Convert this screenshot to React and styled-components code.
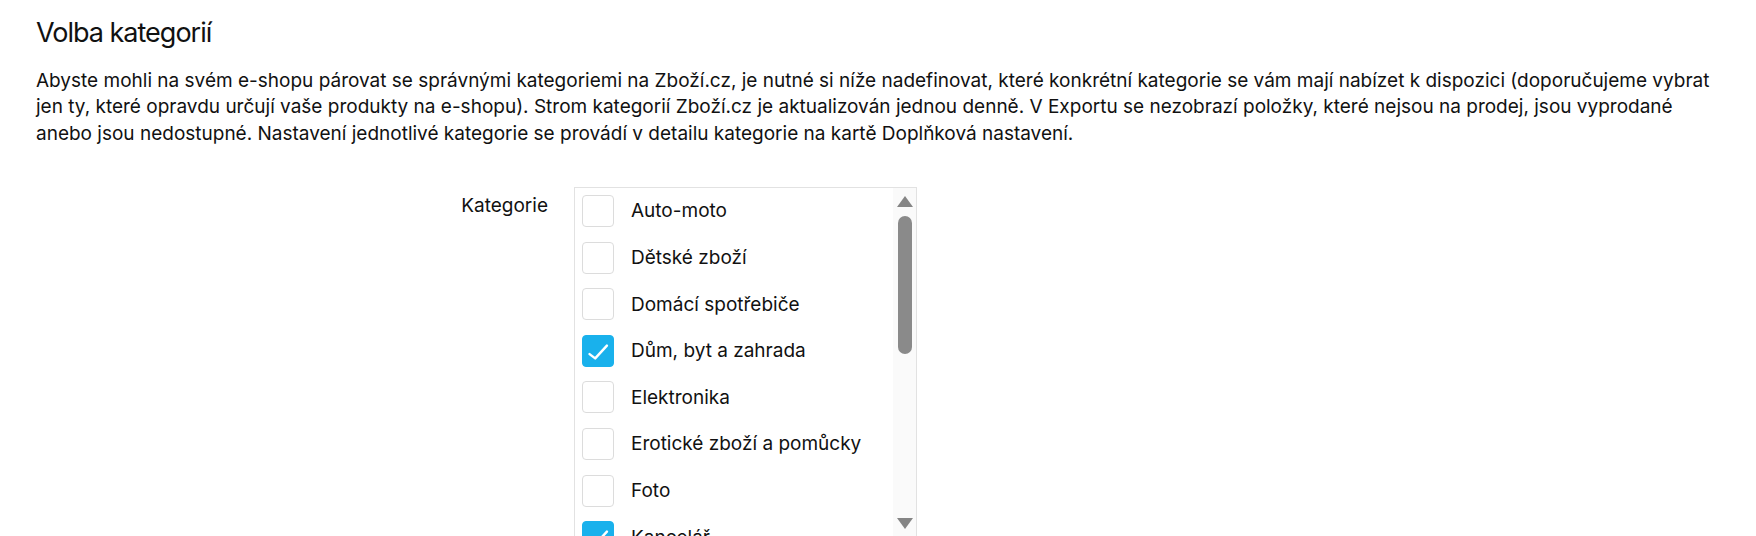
import { createGlobalStyle } from "styled-components";
import styled from "styled-components";

const GlobalStyle = createGlobalStyle`
  body {
    margin: 0;
    background: #fff;
    color: #111;
    font-family: Inter, "Noto Sans", "Liberation Sans", sans-serif;
  }
`;

const Page = styled.div`
  padding: 16px 36px 0;
`;

const Title = styled.h2`
  margin: 0;
  font-size: 27px;
  line-height: 34px;
  font-weight: 400;
  letter-spacing: -1px;
  color: #111;
`;

const Intro = styled.p`
  margin: 17.5px 0 0;
  font-size: 19px;
  line-height: 26.6px;
  color: #111;
`;

const FormRow = styled.div`
  display: grid;
  grid-template-columns: 512px 343px;
  column-gap: 26px;
  margin-top: 39.4px;
`;

const Label = styled.label`
  text-align: right;
  font-size: 19px;
  line-height: 26px;
  padding-top: 6px;
`;

const ListBox = styled.div`
  display: flex;
  height: 350px;
  border: 1px solid #e2e2e2;
  overflow: hidden;
`;

const Options = styled.div`
  flex: 1;
  overflow: hidden;
  padding-left: 7px;
`;

const Option = styled.div`
  display: flex;
  align-items: center;
  gap: 17px;
  height: 46.6px;
  font-size: 19px;
  white-space: nowrap;
`;

const Box = styled.span`
  flex: 0 0 auto;
  display: flex;
  align-items: center;
  justify-content: center;
  width: 32px;
  height: 32px;
  box-sizing: border-box;
  border-radius: 4px;
  border: 1px solid ${(p) => (p.$checked ? "#19b1ec" : "#dcdcdc")};
  background: ${(p) => (p.$checked ? "#19b1ec" : "#fff")};
`;

const ScrollTrack = styled.div`
  width: 23px;
  background: #fafafa;
  display: flex;
  flex-direction: column;
  align-items: center;
  padding: 8px 0 9px;
  box-sizing: border-box;
`;

const Arrow = styled.span`
  width: 0;
  height: 0;
  border-left: 8px solid transparent;
  border-right: 8px solid transparent;
  ${(p) =>
    p.$down
      ? "border-top: 11px solid #858585; margin-top: auto;"
      : "border-bottom: 11px solid #858585;"}
`;

const Thumb = styled.span`
  width: 14px;
  height: 138px;
  margin-top: 9px;
  border-radius: 7px;
  background: #8a8a8a;
`;

const categories = [
  ["Auto-moto", false],
  ["Dětské zboží", false],
  ["Domácí spotřebiče", false],
  ["Dům, byt a zahrada", true],
  ["Elektronika", false],
  ["Erotické zboží a pomůcky", false],
  ["Foto", false],
  ["Kancelář", true],
  ["Kosmetika a zdraví", false],
  ["Oblečení a móda", false],
];

function Check() {
  return (
    <svg width="32" height="32" viewBox="0 0 32 32" fill="none">
      <path
        d="M7 19.3l6 4.6L25.5 10.2"
        stroke="#fff"
        strokeWidth="2.6"
        strokeLinecap="round"
        strokeLinejoin="round"
      />
    </svg>
  );
}

export default function App() {
  return (
    <>
      <GlobalStyle />
      <Page>
        <Title>Volba kategorií</Title>
        <Intro>
          Abyste mohli na svém e-shopu párovat se správnými kategoriemi na
          Zboží.cz, je nutné si níže nadefinovat, které konkrétní kategorie se
          vám mají nabízet k dispozici (doporučujeme vybrat jen ty, které
          opravdu určují vaše produkty na e-shopu). Strom kategorií Zboží.cz je
          aktualizován jednou denně. V Exportu se nezobrazí položky, které
          nejsou na prodej, jsou vyprodané anebo jsou nedostupné. Nastavení
          jednotlivé kategorie se provádí v detailu kategorie na kartě
          Doplňková nastavení.
        </Intro>
        <FormRow>
          <Label>Kategorie</Label>
          <ListBox>
            <Options>
              {categories.map(([name, checked]) => (
                <Option key={name}>
                  <Box $checked={checked}>{checked && <Check />}</Box>
                  {name}
                </Option>
              ))}
            </Options>
            <ScrollTrack>
              <Arrow />
              <Thumb />
              <Arrow $down />
            </ScrollTrack>
          </ListBox>
        </FormRow>
      </Page>
    </>
  );
}
